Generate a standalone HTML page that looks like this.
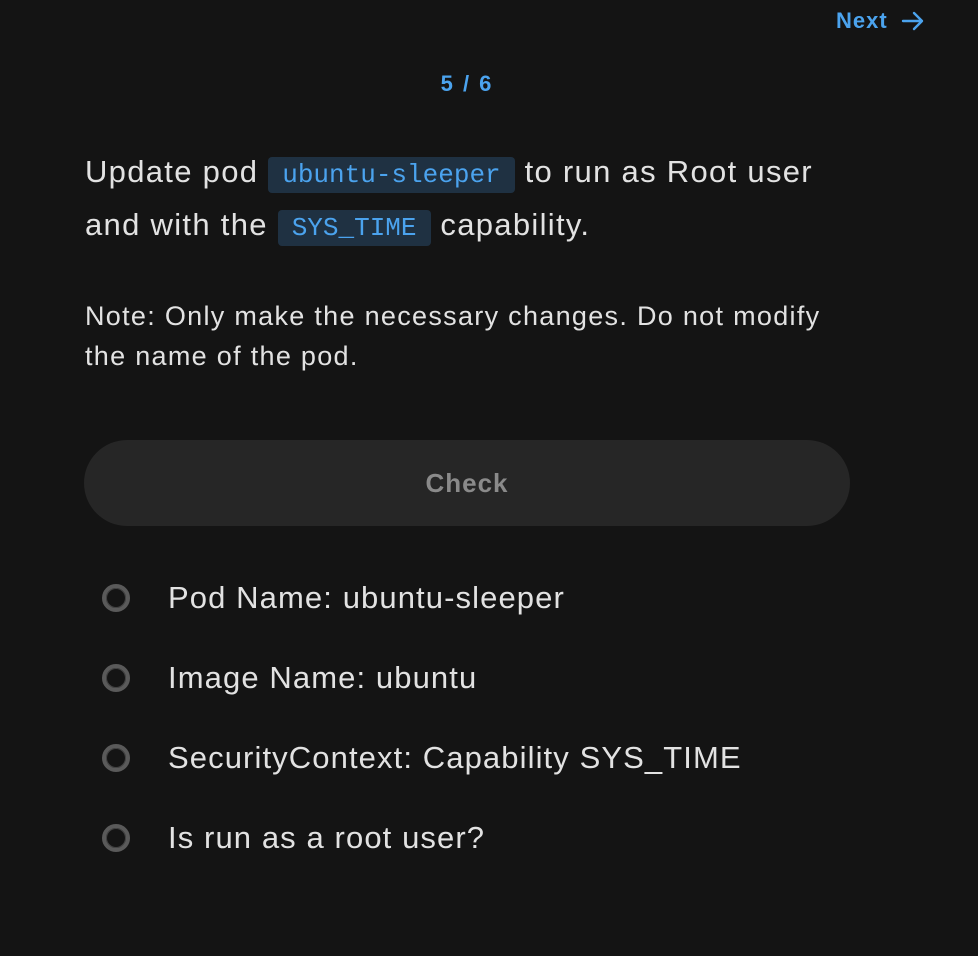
<!DOCTYPE html>
<html><head><meta charset="utf-8"><style>
body{margin:0;background:#141414;width:978px;height:956px;overflow:hidden;font-family:"Liberation Sans",sans-serif;color:#e2e2e2;position:relative}
.next{position:absolute;left:836px;top:8px;color:#4ba3ee;font-weight:bold;font-size:22px;letter-spacing:1px;display:flex;align-items:center;gap:13px}
.cnt{position:absolute;left:0;width:934px;text-align:center;top:71px;color:#4ba3ee;font-weight:bold;font-size:22px;letter-spacing:2px}
.q{position:absolute;left:85px;top:147px;font-size:31px;letter-spacing:1.3px;line-height:50px;width:880px;white-space:nowrap}
code{font-family:"Liberation Mono",monospace;color:#4ba3ee;background:#1f3142;border-radius:4px;padding:3px 14px;font-size:26px;letter-spacing:0}
.note{position:absolute;left:85px;top:296px;font-size:27px;letter-spacing:1.3px;line-height:40px;width:800px;white-space:nowrap}
.btn{position:absolute;left:84px;top:440px;width:766px;height:86px;border-radius:43px;background:#262626;color:#8a8a8a;font-weight:bold;font-size:26px;letter-spacing:1px;text-align:center;line-height:86px}
.item{position:absolute;left:168px;font-size:31px;letter-spacing:1.1px;line-height:40px;white-space:nowrap}
.ring{position:absolute;left:-66px;top:6px;width:20px;height:20px;border-radius:50%;border:4px solid #5a5a5a;box-shadow:inset 0 0 0 1px #444}
</style></head><body>
<div class="next">Next <svg width="24" height="22" viewBox="0 0 24 22"><path d="M2 11H21M13 3l8 8-8 8" fill="none" stroke="#4ba3ee" stroke-width="2.4" stroke-linecap="round" stroke-linejoin="round"/></svg></div>
<div class="cnt">5 / 6</div>
<div class="q">Update pod <code>ubuntu-sleeper</code> to run as Root user<br>and with the <code>SYS_TIME</code> capability.</div>
<div class="note">Note: Only make the necessary changes. Do not modify<br>the name of the pod.</div>
<div class="btn">Check</div>
<div class="item" style="top:578px"><span class="ring"></span>Pod Name: ubuntu-sleeper</div>
<div class="item" style="top:658px"><span class="ring"></span>Image Name: ubuntu</div>
<div class="item" style="top:738px"><span class="ring"></span>SecurityContext: Capability SYS_TIME</div>
<div class="item" style="top:818px"><span class="ring"></span>Is run as a root user?</div>
</body></html>
